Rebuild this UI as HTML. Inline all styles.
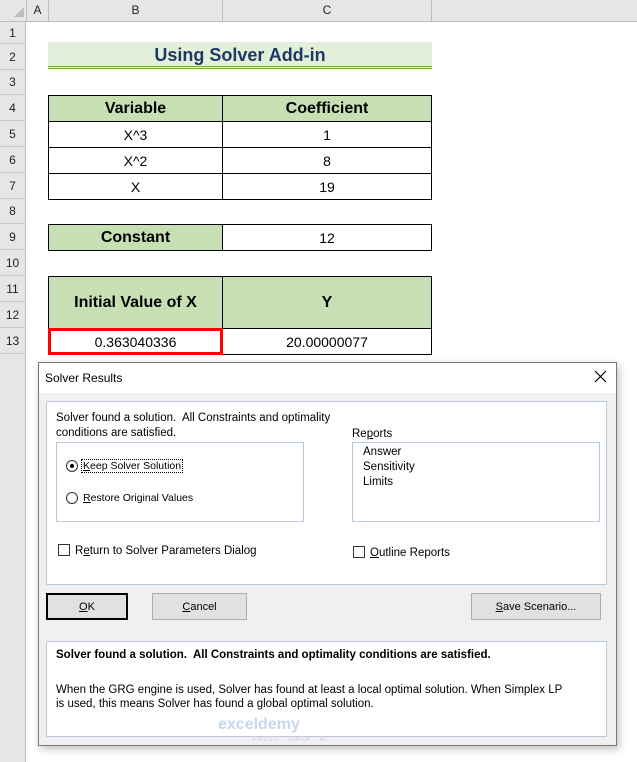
<!DOCTYPE html>
<html><head><meta charset="utf-8"><style>
*{margin:0;padding:0;box-sizing:border-box}
body{width:637px;height:762px;background:#fff;position:relative;overflow:hidden;font-family:"Liberation Sans",sans-serif}
.a{position:absolute}
.hdr{background:#e6e6e6;color:#222;font-size:12px;text-align:center}
.rn{position:absolute;left:0;width:26px;background:#e6e6e6;border-bottom:1px solid #c8c8c8;border-right:1px solid #bdbdbd;font-size:12px;color:#222;text-align:center}
.c{position:absolute;border:1px solid #000;display:flex;align-items:center;justify-content:center;font-size:14px;color:#000}
.g{background:#c6e0b4;font-weight:bold;font-size:16px}
.d{font-family:"Liberation Sans",sans-serif;font-size:11px;color:#000}
.btn{position:absolute;background:#e1e1e1;border:1px solid #adadad;font-size:11px;display:flex;align-items:center;justify-content:center}
u{text-decoration:underline}
</style></head><body>
<div class="a hdr" style="left:0;top:0;width:637px;height:22px;border-bottom:1px solid #bdbdbd"></div>
<div class="a" style="left:14px;top:7px;width:0;height:0;border-left:10px solid transparent;border-bottom:10px solid #bdbdbd"></div>
<div class="a hdr" style="left:26px;top:0;width:22px;height:21px;line-height:21px;border-left:1px solid #bdbdbd">A</div>
<div class="a hdr" style="left:48px;top:0;width:174px;height:21px;line-height:21px;border-left:1px solid #bdbdbd">B</div>
<div class="a hdr" style="left:222px;top:0;width:210px;height:21px;line-height:21px;border-left:1px solid #bdbdbd;border-right:1px solid #bdbdbd">C</div>
<div class="a" style="left:0;top:22px;width:26px;height:740px;background:#e6e6e6;border-right:1px solid #bdbdbd"></div>
<div class="rn" style="top:22px;height:22px;line-height:22px">1</div>
<div class="rn" style="top:44px;height:26px;line-height:26px">2</div>
<div class="rn" style="top:70px;height:25px;line-height:25px">3</div>
<div class="rn" style="top:95px;height:26px;line-height:26px">4</div>
<div class="rn" style="top:121px;height:26px;line-height:26px">5</div>
<div class="rn" style="top:147px;height:26px;line-height:26px">6</div>
<div class="rn" style="top:173px;height:26px;line-height:26px">7</div>
<div class="rn" style="top:199px;height:25px;line-height:25px">8</div>
<div class="rn" style="top:224px;height:26px;line-height:26px">9</div>
<div class="rn" style="top:250px;height:26px;line-height:26px">10</div>
<div class="rn" style="top:276px;height:26px;line-height:26px">11</div>
<div class="rn" style="top:302px;height:26px;line-height:26px">12</div>
<div class="rn" style="top:328px;height:26px;line-height:26px">13</div>
<div class="a" style="left:48px;top:42px;width:384px;height:27px;background:#e2efda;border-bottom:3px double #70ad47;color:#203864;font-weight:bold;font-size:18px;text-align:center;line-height:27px">Using Solver Add-in</div>
<div class="c g" style="left:48px;top:95px;width:175px;height:27px">Variable</div>
<div class="c g" style="left:222px;top:95px;width:210px;height:27px">Coefficient</div>
<div class="c" style="left:48px;top:121px;width:175px;height:27px">X^3</div>
<div class="c" style="left:222px;top:121px;width:210px;height:27px">1</div>
<div class="c" style="left:48px;top:147px;width:175px;height:27px">X^2</div>
<div class="c" style="left:222px;top:147px;width:210px;height:27px">8</div>
<div class="c" style="left:48px;top:173px;width:175px;height:27px">X</div>
<div class="c" style="left:222px;top:173px;width:210px;height:27px">19</div>
<div class="c g" style="left:48px;top:224px;width:175px;height:27px">Constant</div>
<div class="c" style="left:222px;top:224px;width:210px;height:27px">12</div>
<div class="c g" style="left:48px;top:276px;width:175px;height:53px">Initial Value of X</div>
<div class="c g" style="left:222px;top:276px;width:210px;height:53px">Y</div>
<div class="c" style="left:222px;top:328px;width:210px;height:27px">20.00000077</div>
<div class="c" style="left:48px;top:328px;width:175px;height:27px;border:3px solid #f00">0.363040336</div>
<div class="a" style="left:38px;top:362px;width:579px;height:384px;background:#f0f0f0;border:1px solid #777;box-shadow:2px 3px 8px rgba(0,0,0,.25)"></div>
<div class="a" style="left:39px;top:363px;width:577px;height:30px;background:#fff"></div>
<div class="a d" style="left:45px;top:371px;font-size:12px">Solver Results</div>
<svg class="a" style="left:594px;top:370px" width="13" height="13"><path d="M1 1L12 12M12 1L1 12" stroke="#000" stroke-width="1.2"/></svg>
<div class="a" style="left:46px;top:401px;width:561px;height:184px;background:#fff;border:1px solid #b9c9d9"></div>
<div class="a d" style="left:56px;top:411px;line-height:15px;font-size:11.5px">Solver found a solution.&nbsp; All Constraints and optimality<br>conditions are satisfied.</div>
<div class="a" style="left:56px;top:442px;width:248px;height:80px;border:1px solid #b9c9d9"></div>
<div class="a" style="left:66px;top:460px;width:12px;height:12px;border:1px solid #333;border-radius:50%"></div>
<div class="a" style="left:70px;top:464px;width:4px;height:4px;background:#000;border-radius:50%"></div>
<div class="a d" style="left:81px;top:459px;border:1px dotted #000;padding:0 1px;font-size:10.5px"><u>K</u>eep Solver Solution</div>
<div class="a" style="left:66px;top:492px;width:12px;height:12px;border:1px solid #333;border-radius:50%"></div>
<div class="a d" style="left:83px;top:492px;font-size:10.5px"><u>R</u>estore Original Values</div>
<div class="a d" style="left:352px;top:428px;font-size:11.5px">Re<u>p</u>orts</div>
<div class="a" style="left:352px;top:442px;width:248px;height:80px;border:1px solid #b9c9d9"></div>
<div class="a d" style="left:363px;top:445px;line-height:15px;font-size:11.5px">Answer<br>Sensitivity<br>Limits</div>
<div class="a" style="left:58px;top:544px;width:12px;height:12px;border:1px solid #333;background:#fff"></div>
<div class="a d" style="left:75px;top:545px;font-size:11.5px">R<u>e</u>turn to Solver Parameters Dialog</div>
<div class="a" style="left:353px;top:546px;width:12px;height:12px;border:1px solid #333;background:#fff"></div>
<div class="a d" style="left:370px;top:547px;font-size:11.5px"><u>O</u>utline Reports</div>
<div class="btn" style="left:46px;top:593px;width:82px;height:27px;border:2px solid #000"><u>O</u>K</div>
<div class="btn" style="left:152px;top:593px;width:95px;height:27px"><u>C</u>ancel</div>
<div class="btn" style="left:471px;top:593px;width:130px;height:27px"><u>S</u>ave Scenario...</div>
<div class="a" style="left:46px;top:641px;width:561px;height:96px;background:#fff;border:1px solid #b9c9d9"></div>
<div class="a d" style="left:56px;top:649px;font-weight:bold;font-size:11.5px">Solver found a solution.&nbsp; All Constraints and optimality conditions are satisfied.</div>
<div class="a d" style="left:56px;top:683px;line-height:14px;font-size:11.5px;width:545px">When the GRG engine is used, Solver has found at least a local optimal solution. When Simplex LP<br>is used, this means Solver has found a global optimal solution.</div>
<div class="a" style="left:218px;top:716px;font-size:16px;font-weight:bold;color:#c8d6f0">exceldemy</div>
<div class="a" style="left:252px;top:736px;font-size:7px;color:#ccd;letter-spacing:1px">EXCEL · DATA · BI</div>
</body></html>
